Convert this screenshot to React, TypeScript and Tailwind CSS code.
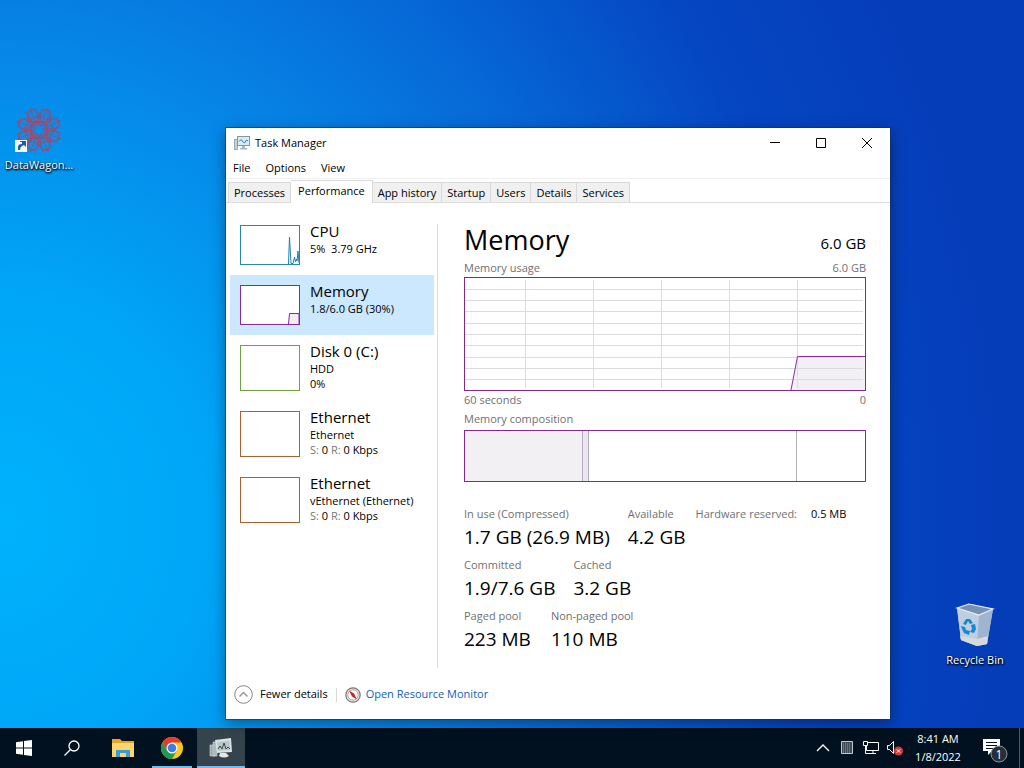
import type { ReactNode } from 'react';
import clsx from 'clsx';

interface Device {
  name: string;
  lines: ReactNode[];
  box: string;
  graph?: ReactNode;
  active?: boolean;
}

const menus = ['File', 'Options', 'View'];
const tabs = ['Processes', 'Performance', 'App history', 'Startup', 'Users', 'Details', 'Services'];

const Traffic = () => (
  <>
    <span className="text-[#777]">S:</span> 0 <span className="text-[#777]">R:</span> 0 Kbps
  </>
);

const devices: Device[] = [
  {
    name: 'CPU',
    lines: ['5%  3.79 GHz'],
    box: 'h-10 border-[#2a87a8]',
    graph: <path d="M47.500 38L48.500 11L50 37.500H52L53.500 31L54.500 36L55.500 33L56 35L57 25L58 37" stroke="#1f82a8" strokeLinejoin="bevel" />,
  },
  {
    name: 'Memory',
    lines: ['1.8/6.0 GB (30%)'],
    box: 'h-10 border-[#8628a0]',
    graph: <path d="M47.500 38L48.500 27.500H58V38" fill="#f4ecf7" stroke="#8628a0" />,
    active: true,
  },
  { name: 'Disk 0 (C:)', lines: ['HDD', '0%'], box: 'h-[46px] border-[#72a03c]' },
  { name: 'Ethernet', lines: ['Ethernet', <Traffic />], box: 'h-[46px] border-[#a86230]' },
  { name: 'Ethernet', lines: ['vEthernet (Ethernet)', <Traffic />], box: 'h-[46px] border-[#a86230]' },
];

function MonitorIcon({ className }: { className?: string }) {
  return (
    <svg viewBox="0 0 16 16" className={className} aria-hidden="true">
      <rect x="0.5" y="4.5" width="3" height="10" fill="#c9d1d6" stroke="#8c989f" strokeWidth="0.8" />
      <rect x="3.5" y="1.5" width="12" height="9" fill="#d5edf8" stroke="#8795a0" />
      <path d="M5 6.5L7 4.5L9 7L10.5 8L12.5 5L14 6" fill="none" stroke="#2f7fa8" />
      <path d="M8 11h3v2h2v1.5H6V13h2z" fill="#aab5bc" />
    </svg>
  );
}

function DeviceButton({ device }: { device: Device }) {
  return (
    <button type="button" className={clsx('flex w-full gap-2.5 px-2.5 text-left', device.active && 'bg-[#cce8ff]')}>
      <span className={clsx('my-2.5 block w-[60px] shrink-0 border bg-white', device.box)}>
        {device.graph && (
          <svg viewBox="0 0 58 38" className="block h-full w-full" fill="none" aria-hidden="true">
            {device.graph}
          </svg>
        )}
      </span>
      <span className="block pt-1.5 whitespace-pre">
        <span className="block text-[15px] leading-5">{device.name}</span>
        {device.lines.map((line, i) => (
          <span key={i} className="block text-[11px] leading-[15px]">{line}</span>
        ))}
      </span>
    </button>
  );
}

function UsageChart() {
  return (
    <svg viewBox="0 0 400 112" preserveAspectRatio="none" className="block h-[114px] w-full border border-[#7f2a90]" role="img" aria-label="Memory usage">
      <path d="M326 112L332.500 78.500H400V112z" fill="#f2f0f5" />
      <g stroke="#dcdcdf" shapeRendering="crispEdges">
        {[60, 128, 196, 264, 332].map((x) => (
          <path key={x} d={`M${x + 0.5} 2V110`} vectorEffect="non-scaling-stroke" />
        ))}
        {[11, 22, 33, 45, 56, 67, 79, 90, 101].map((y) => (
          <path key={y} d={`M0 ${y + 0.5}H398`} vectorEffect="non-scaling-stroke" />
        ))}
      </g>
      <path d="M326 112L332.500 78.500H400" fill="none" stroke="#8b2fa5" vectorEffect="non-scaling-stroke" />
    </svg>
  );
}

function Stat({ label, value }: { label: string; value: string }) {
  return (
    <div>
      <dt className="text-[11px] leading-[18px] text-[#707070]">{label}</dt>
      <dd className="text-[19px] leading-7">{value}</dd>
    </div>
  );
}

function MemoryPanel() {
  return (
    <section className="flex-1 pr-6 pl-[26px]">
      <header className="flex items-end justify-between">
        <h1 className="text-[27px] leading-8">Memory</h1>
        <span className="text-[15px] leading-[25px]">6.0 GB</span>
      </header>
      <div className="flex justify-between pt-[3px] pb-px text-[11px] leading-[17px] text-[#707070]">
        <span>Memory usage</span>
        <span>6.0 GB</span>
      </div>
      <UsageChart />
      <div className="flex justify-between text-[11px] leading-[18px] text-[#707070]">
        <span>60 seconds</span>
        <span>0</span>
      </div>
      <p className="pb-0.5 text-[11px] leading-[19px] text-[#707070]">Memory composition</p>
      <div className="flex h-[52px] border border-[#7f2a90]">
        <span className="w-[29.5%] border-r border-[#b9a9c0] bg-[#f3f0f4]" />
        <span className="w-[1.5%] border-r border-[#b9a9c0] bg-[#ebe7ef]" />
        <span className="w-[52%] border-r border-[#b5b0b8]" />
      </div>
      <div className="flex flex-col gap-[5px] pt-[23px]">
        <div className="flex">
          <dl className="flex gap-[18px]">
            <Stat label="In use (Compressed)" value="1.7 GB (26.9 MB)" />
            <Stat label="Available" value="4.2 GB" />
          </dl>
          <dl className="flex gap-3.5 pl-2.5 text-[11px] leading-[18px]">
            <dt className="text-[#707070]">Hardware reserved:</dt>
            <dd>0.5 MB</dd>
          </dl>
        </div>
        <dl className="flex gap-[18px]">
          <Stat label="Committed" value="1.9/7.6 GB" />
          <Stat label="Cached" value="3.2 GB" />
        </dl>
        <dl className="flex gap-5">
          <Stat label="Paged pool" value="223 MB" />
          <Stat label="Non-paged pool" value="110 MB" />
        </dl>
      </div>
    </section>
  );
}

function TaskManager() {
  return (
    <main className="absolute top-32 right-[134px] left-[226px] bg-white text-black shadow-[0_0_0_1px_rgba(20,50,90,0.6),0_4px_14px_rgba(0,0,0,0.4)]">
      <div className="flex h-[30px] items-center pl-2">
        <MonitorIcon className="h-4 w-4" />
        <span className="flex-1 pl-[5px] text-[11px]">Task Manager</span>
        <button type="button" aria-label="Minimize" className="flex h-full w-[46px] items-center justify-center">
          <svg className="h-2.5 w-2.5" viewBox="0 0 10 10" stroke="#000"><path d="M0 4.500h10" /></svg>
        </button>
        <button type="button" aria-label="Maximize" className="flex h-full w-[46px] items-center justify-center">
          <svg className="h-2.5 w-2.5" viewBox="0 0 10 10" fill="none" stroke="#000"><path d="M0.500 0.500h9v9h-9z" /></svg>
        </button>
        <button type="button" aria-label="Close" className="flex h-full w-[46px] items-center justify-center">
          <svg className="h-2.5 w-2.5" viewBox="0 0 10 10" stroke="#000"><path d="M0 0l10 10M10 0L0 10" /></svg>
        </button>
      </div>
      <nav className="flex h-5 gap-[15px] pl-[7px] text-[11px] leading-5">
        {menus.map((menu) => (
          <button key={menu} type="button">{menu}</button>
        ))}
      </nav>
      <div role="tablist" className="flex h-[25px] items-end border-t border-b border-t-[#f0f0f0] border-b-[#dcdcdc] pl-0.5 text-[11px]">
        {tabs.map((tab) => {
          const selected = tab === 'Performance';
          return (
            <button
              key={tab}
              type="button"
              role="tab"
              aria-selected={selected}
              className={clsx(
                'border-t border-r border-[#d9d9d9] first:border-l',
                selected ? '-mb-px h-[23px] bg-white px-[7px] pb-0.5' : 'h-5 bg-[#f0f0f0] px-[5px] pt-0.5',
              )}
            >
              {tab}
            </button>
          );
        })}
      </div>
      <div className="flex">
        <aside className="flex w-[211px] shrink-0 flex-col pt-3 pr-[3px] pl-1">
          {devices.map((device, i) => (
            <DeviceButton key={i} device={device} />
          ))}
        </aside>
        <div className="mt-[21px] flex min-h-[444px] flex-1 border-l border-[#dcdcdc]">
          <MemoryPanel />
        </div>
      </div>
      <footer className="flex h-[51px] items-center pt-0.5 pl-2 text-[11px]">
        <button type="button" className="flex items-center gap-[7px]">
          <svg viewBox="0 0 19 19" className="h-[19px] w-[19px]" fill="none" aria-hidden="true">
            <circle cx="9.5" cy="9.5" r="8.8" stroke="#858585" />
            <path d="M5.500 11.500l4-4 4 4" stroke="#999" strokeWidth="1.500" />
          </svg>
          Fewer details
        </button>
        <span className="mx-2 h-3.5 w-px bg-[#d8d8d8]" />
        <a href="#resource-monitor" className="flex items-center gap-[5px] text-[#0f5fb4]">
          <svg viewBox="0 0 16 16" className="h-4 w-4" aria-hidden="true">
            <circle cx="8" cy="8" r="7.2" fill="#eee8e4" stroke="#777" strokeWidth="1.2" />
            <circle cx="8" cy="8" r="5.2" fill="#fff" stroke="#c99c96" />
            <path d="M4 3.500L9 6.500L12 12.500L7 9.500z" fill="#c22828" />
          </svg>
          Open Resource Monitor
        </a>
      </footer>
    </main>
  );
}

const petals = [0, 45, 90, 135, 180, 225, 270, 315];

function DataWagonIcon() {
  return (
    <svg viewBox="0 0 48 48" className="h-12 w-12" fill="none" aria-hidden="true">
      <g stroke="#9a4a70" strokeWidth="0.800">
        {petals.map((angle) => (
          <g key={angle} transform={`rotate(${angle + 22} 24 24)`}>
            <path d="M24 20L16 11L24 1L32 11zM16 11L33 20M32 11L15 20M19 3h10v8H19zM24 1V20" />
          </g>
        ))}
      </g>
      <g fill="#c64552">
        {petals.map((angle) => (
          <circle key={angle} cx="24" cy="14" r="1.300" transform={`rotate(${angle} 24 24)`} />
        ))}
      </g>
      <path d="M0 34h12v12H0z" fill="#f4f7fa" />
      <path d="M3 44v-3q0-3 4-3v-2H5v-1h6v6l-2-2-2 1q-2 1-2 4z" fill="#1c5ba8" />
    </svg>
  );
}

function RecycleBinIcon() {
  return (
    <svg viewBox="0 0 40 44" className="h-11 w-10" aria-hidden="true">
      <path d="M2 5L14 1L38 6L32 41L22 43L6 37z" fill="#b9cbdf" />
      <path d="M2 5L24 12L22 43L6 37z" fill="#c0cfdf" />
      <path d="M24 12L38 6L32 41L22 43z" fill="#9eb4cf" />
      <path d="M2 5L14 1L38 6L24 12z" fill="#7591b5" stroke="#e6eef5" strokeWidth="1.200" />
      <path d="M5 33L22 36L33 33L32 41L22 43L6 37z" fill="#d8d9dc" />
      <g fill="#1687d3">
        <path d="M8 21l3-5 4 0 3 4-3 1-2-3-2 4z" />
        <path d="M16 22l4-1 1 5-2 4-4-1 2-3z" />
        <path d="M6 23l4 1 1 3 4 1-1 4-5-2-2-4z" />
      </g>
    </svg>
  );
}

function Taskbar() {
  return (
    <footer className="flex h-10 items-stretch bg-[#02111f] text-white">
      <button type="button" aria-label="Start" className="flex w-12 items-center justify-center">
        <svg viewBox="0 0 16 16" className="h-4 w-4" fill="#fff"><path d="M0 2.300L7 1.300V7.500H0zM8 1.100L16 0V7.500H8zM0 8.500H7V14.700L0 13.700zM8 8.500H16V16L8 14.900z" /></svg>
      </button>
      <button type="button" aria-label="Search" className="flex w-12 items-center justify-center">
        <svg viewBox="0 0 16 16" className="h-4 w-4" fill="none" stroke="#fff" strokeWidth="1.300"><circle cx="10" cy="6" r="5" /><path d="M6.500 9.500L0.500 15.500" /></svg>
      </button>
      <button type="button" aria-label="File Explorer" className="ml-[3px] flex w-12 items-center justify-center">
        <svg viewBox="0 0 22 18" className="h-[18px] w-[22px]">
          <path d="M0 0h8l2 2h12v16H0z" fill="#e5a52b" />
          <path d="M0 4h22v14H0z" fill="#fbd66c" />
          <path d="M4 11h14v7h-4v-4H8v4H4z" fill="#3d9ad4" />
        </svg>
      </button>
      <button type="button" aria-label="Google Chrome" className="mx-px flex w-12 flex-col items-center">
        <span className="flex flex-1 items-center pt-0.5">
          <svg viewBox="0 0 24 24" className="h-[22px] w-[22px]">
            <circle cx="12" cy="12" r="12" fill="#fbc916" />
            <path d="M1.600 6A12 12 0 0 1 22.400 6H12L6.800 15z" fill="#e33b2e" />
            <path d="M1.600 6A12 12 0 0 0 12 24L17.200 15H6.800z" fill="#229a4b" />
            <circle cx="12" cy="12" r="6" fill="#fff" />
            <circle cx="12" cy="12" r="4.700" fill="#3b7ee8" />
          </svg>
        </span>
        <span className="h-0.5 w-10 bg-[#76b9ed]" />
      </button>
      <button type="button" aria-label="Task Manager" className="flex w-12 flex-col items-center bg-[#34434c]">
        <span className="flex flex-1 items-center pt-0.5">
          <svg viewBox="0 0 24 22" className="h-[22px] w-6">
            <path d="M1 8h5v11H1zM4 5h4v14H4z" fill="#9ba7ad" stroke="#dbe2e5" strokeWidth="0.600" />
            <path d="M6 3L22 1L23 15L8 16z" fill="#dce3e5" />
            <path d="M8 5L20.500 3.500L21 13L9 14z" fill="#b9c6ca" />
            <path d="M9 12l2-3 2 3 2-6 2 6 2-2 2 2" fill="none" stroke="#31474f" />
            <path d="M11 16h6l3 3q-5 3-10 0z" fill="#e4e8e9" />
          </svg>
        </span>
        <span className="h-0.5 w-full bg-[#76b9ed]" />
      </button>

      <div className="ml-auto flex items-center gap-2">
        <button type="button" aria-label="Show hidden icons" className="flex w-4 justify-center">
          <svg viewBox="0 0 14 8" className="h-2 w-3.5" fill="none" stroke="#fff" strokeWidth="1.300"><path d="M1 7l6-6 6 6" /></svg>
        </button>
        <svg viewBox="0 0 16 16" className="h-4 w-4" fill="none" stroke="#c3cad0" aria-hidden="true">
          <path d="M2.500 1.500h11v12h-11z" fill="#3f4b56" />
          <path d="M4 4h8M4 6h8M4 8h8M4 10h8M4 12h8" stroke="#8c979f" strokeDasharray="1 1" />
        </svg>
        <svg viewBox="0 0 16 16" className="h-4 w-4" fill="none" stroke="#fff" aria-hidden="true">
          <path d="M4.500 2.500h11v8H3.500V6M0.500 1.500h4v4h-4zM2.500 5.500v8h4M10 10.500v3M6 13.500h7" />
        </svg>
        <svg viewBox="0 0 16 16" className="h-4 w-4" fill="none" aria-hidden="true">
          <path d="M0.500 5.500h2l4-4v12l-4-4h-2z" stroke="#fff" />
          <circle cx="11.500" cy="11" r="4.500" fill="#d33b38" />
          <path d="M9.800 9.300l3.400 3.400M13.200 9.300l-3.400 3.400" stroke="#fff" />
        </svg>
      </div>
      <div className="flex w-[70px] flex-col justify-center text-center text-[11px] leading-[18px]">
        <time dateTime="08:41">8:41 AM</time>
        <time dateTime="2022-01-08">1/8/2022</time>
      </div>
      <button type="button" aria-label="Notifications" className="mr-1 flex w-[47px] items-center justify-center border-r border-[#4a5a66] pt-1">
        <svg viewBox="0 0 26 26" className="h-[26px] w-[26px]">
          <path d="M0 2h17v12H9L5 18v-4H0z" fill="#fff" />
          <path d="M3 5.500h11M3 8.500h11M3 11.500h7" stroke="#02111f" />
          <circle cx="16" cy="17" r="8" fill="#252f37" stroke="#8c959b" />
          <text x="16" y="21.500" textAnchor="middle" fill="#fff" fontSize="12">1</text>
        </svg>
      </button>
    </footer>
  );
}

export default function App() {
  return (
    <div className="flex min-h-screen flex-col overflow-hidden bg-[radial-gradient(ellipse_100%_150%_at_0%_68%,#00b2fc_0%,#00a6f8_20%,#0688e8_40%,#0668d6_60%,#0546c2_80%,#053cb8_100%)] font-['Open_Sans','Noto_Sans',sans-serif]">
      <div className="relative flex-1">
        <a href="#datawagon" className="absolute top-[106px] left-0 flex w-[78px] flex-col items-center gap-0.5 text-[11px] leading-[18px] text-white [text-shadow:1px_1px_2px_#000,0_1px_2px_#000]">
          <DataWagonIcon />
          DataWagon...
        </a>
        <a href="#recycle-bin" className="absolute right-2.5 bottom-[59px] flex w-[78px] flex-col items-center gap-1 text-[11px] leading-[18px] text-white [text-shadow:1px_1px_2px_#000,0_1px_2px_#000]">
          <RecycleBinIcon />
          Recycle Bin
        </a>
        <TaskManager />
      </div>
      <Taskbar />
    </div>
  );
}
